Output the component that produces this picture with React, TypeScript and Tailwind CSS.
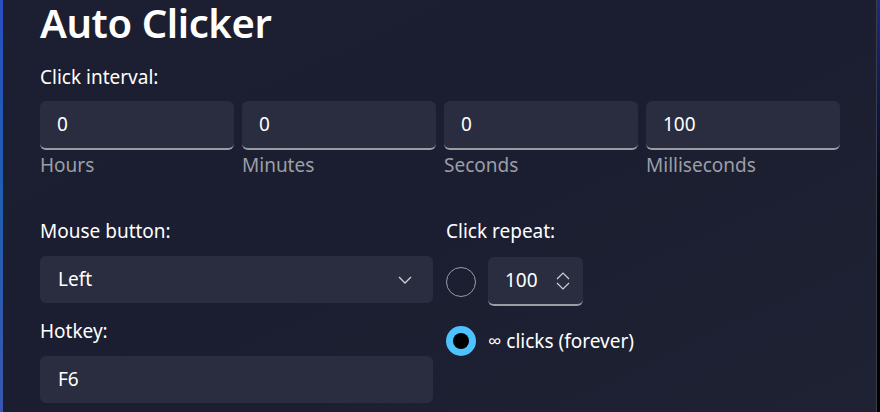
import React from 'react'

const font = { fontFamily: '"Noto Sans", "Open Sans", sans-serif' }

const TimeField = ({ value, label }: { value: string; label: string }) => (
    <div className="flex flex-col">
        <div className="h-[49px] rounded-[6px] bg-[#2a2d40] border-b-2 border-[#9c9ca4] flex items-center px-[17px] text-[19px] text-white">
            {value}
        </div>
        <span className="mt-[2px] text-[19px] leading-[26px] text-[#9d9ea6]">{label}</span>
    </div>
)

const App = () => {
    return (
        <div className="w-[880px] h-[412px] flex bg-[#1b1f30] overflow-hidden" style={font}>
            <div className="w-[3px] h-full bg-gradient-to-b from-[#2a4fc0] via-[#1f5fb0] to-[#3a55b0]" />
            <div className="flex-1 flex flex-col pl-[37px] pr-[33px] bg-gradient-to-br from-[#1c1f31] via-[#1b1e30] to-[#1f2233] text-white">
                <h1 className="text-[40px] font-semibold leading-[46px] tracking-[-0.4px]">Auto Clicker</h1>
                <div className="mt-[18px] text-[19px] leading-[26px]">Click interval:</div>
                <div className="mt-[11px] grid grid-cols-4 gap-[8px] w-[800px]">
                    <TimeField value="0" label="Hours" />
                    <TimeField value="0" label="Minutes" />
                    <TimeField value="0" label="Seconds" />
                    <TimeField value="100" label="Milliseconds" />
                </div>
                <div className="mt-[40px] grid grid-cols-[393px_1fr] gap-x-[13px]">
                    <div className="flex flex-col">
                        <span className="text-[19px] leading-[26px]">Mouse button:</span>
                        <div className="mt-[12px] h-[47px] rounded-[6px] bg-[#2a2d40] flex items-center justify-between pl-[18px] pr-[21px] text-[19px]">
                            <span>Left</span>
                            <svg width="14" height="8" viewBox="0 0 14 8" fill="none">
                                <path d="M1 1l6 6 6-6" stroke="#d0d0d6" strokeWidth="1.3" />
                            </svg>
                        </div>
                        <span className="mt-[15px] text-[19px] leading-[26px]">Hotkey:</span>
                        <div className="mt-[12px] h-[47px] rounded-[6px] bg-[#2a2d40] flex items-center pl-[18px] text-[19px]">
                            F6
                        </div>
                    </div>
                    <div className="flex flex-col">
                        <span className="text-[19px] leading-[26px]">Click repeat:</span>
                        <div className="mt-[13px] flex items-center gap-[12px]">
                            <div className="w-[30px] h-[30px] rounded-full border-[1.5px] border-[#9a9aa2]" />
                            <div className="h-[49px] w-[95px] rounded-[6px] bg-[#2a2d40] border-b-2 border-[#9c9ca4] flex items-center justify-between pl-[17px] pr-[12px] text-[19px]">
                                <span>100</span>
                                <svg width="16" height="20" viewBox="0 0 16 20" fill="none">
                                    <path d="M2 8l6-6 6 6M2 12l6 6 6-6" stroke="#d0d0d6" strokeWidth="1.2" />
                                </svg>
                            </div>
                        </div>
                        <div className="mt-[20px] flex items-center gap-[12px]">
                            <div className="w-[30px] h-[30px] rounded-full bg-[#4cc2ff] flex items-center justify-center">
                                <div className="w-[16px] h-[16px] rounded-full bg-black" />
                            </div>
                            <span className="text-[19px]">∞ clicks (forever)</span>
                        </div>
                    </div>
                </div>
            </div>
            <div className="w-[1px] h-full bg-[#3a3c48]" />
            <div className="w-[3px] h-full bg-gradient-to-b from-[#1a2a8a] via-[#05060f] to-[#000000]" />
        </div>
    )
}

export default App
